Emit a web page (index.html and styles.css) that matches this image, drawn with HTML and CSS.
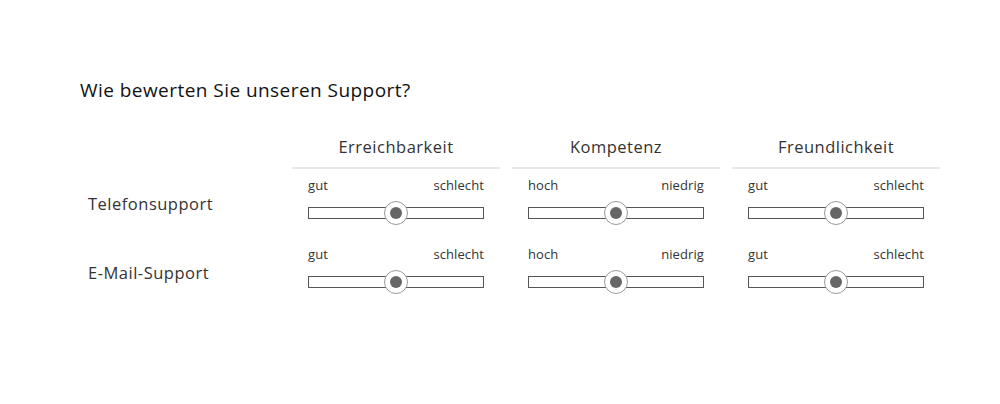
FILE: index.html
```html
<!DOCTYPE html>
<html lang="de">
<head>
<meta charset="utf-8">
<title>Support-Bewertung</title>
<link rel="stylesheet" href="styles.css">
</head>
<body>
<main class="survey">
  <h2 class="survey-title">Wie bewerten Sie unseren Support?</h2>
  <div class="matrix">
    <div class="corner"></div>
    <div class="col-head">Erreichbarkeit</div>
    <div class="col-head">Kompetenz</div>
    <div class="col-head">Freundlichkeit</div>

    <div class="row-label">Telefonsupport</div>
    <div class="cell">
      <div class="ends"><span>gut</span><span>schlecht</span></div>
      <div class="track"><span class="handle"></span></div>
    </div>
    <div class="cell">
      <div class="ends"><span>hoch</span><span>niedrig</span></div>
      <div class="track"><span class="handle"></span></div>
    </div>
    <div class="cell">
      <div class="ends"><span>gut</span><span>schlecht</span></div>
      <div class="track"><span class="handle"></span></div>
    </div>

    <div class="row-label">E-Mail-Support</div>
    <div class="cell">
      <div class="ends"><span>gut</span><span>schlecht</span></div>
      <div class="track"><span class="handle"></span></div>
    </div>
    <div class="cell">
      <div class="ends"><span>hoch</span><span>niedrig</span></div>
      <div class="track"><span class="handle"></span></div>
    </div>
    <div class="cell">
      <div class="ends"><span>gut</span><span>schlecht</span></div>
      <div class="track"><span class="handle"></span></div>
    </div>
  </div>
</main>
</body>
</html>
```
FILE: styles.css
```css
html, body {
  margin: 0;
  padding: 0;
  background: #ffffff;
}

body {
  font-family: "Open Sans", "Liberation Sans", sans-serif;
  color: #333333;
}

.survey {
  padding: 77px 0 0 80px;
}

.survey-title {
  margin: 0;
  font-size: 19px;
  line-height: 27px;
  font-weight: 400;
  letter-spacing: 0.45px;
  color: #111111;
}

.matrix {
  display: grid;
  grid-template-columns: 200px repeat(3, 208px);
  column-gap: 12px;
  margin-top: 31px;
}

.col-head {
  text-align: center;
  font-size: 16.5px;
  line-height: 24px;
  letter-spacing: 0.5px;
  color: #333333;
  padding-bottom: 8px;
  border-bottom: 2px solid #e8e8e8;
}

.row-label {
  align-self: center;
  padding-left: 8px;
  font-size: 16.5px;
  line-height: 24px;
  letter-spacing: 0.5px;
  color: #333333;
}

.cell {
  padding: 6px 16px 19px;
}

.ends {
  display: flex;
  justify-content: space-between;
  font-size: 13px;
  line-height: 20px;
  letter-spacing: 0.1px;
  color: #333333;
}

.track {
  position: relative;
  margin-top: 12px;
  height: 10px;
  border: 1px solid #555555;
  background: #ffffff;
}

.handle {
  position: absolute;
  left: 50%;
  top: 50%;
  width: 22px;
  height: 22px;
  margin: -12px 0 0 -12px;
  border: 1px solid #9a9a9a;
  border-radius: 50%;
  background: #ffffff;
}

.handle::after {
  content: "";
  position: absolute;
  left: 5px;
  top: 5px;
  width: 12px;
  height: 12px;
  border-radius: 50%;
  background: #666666;
}
```
